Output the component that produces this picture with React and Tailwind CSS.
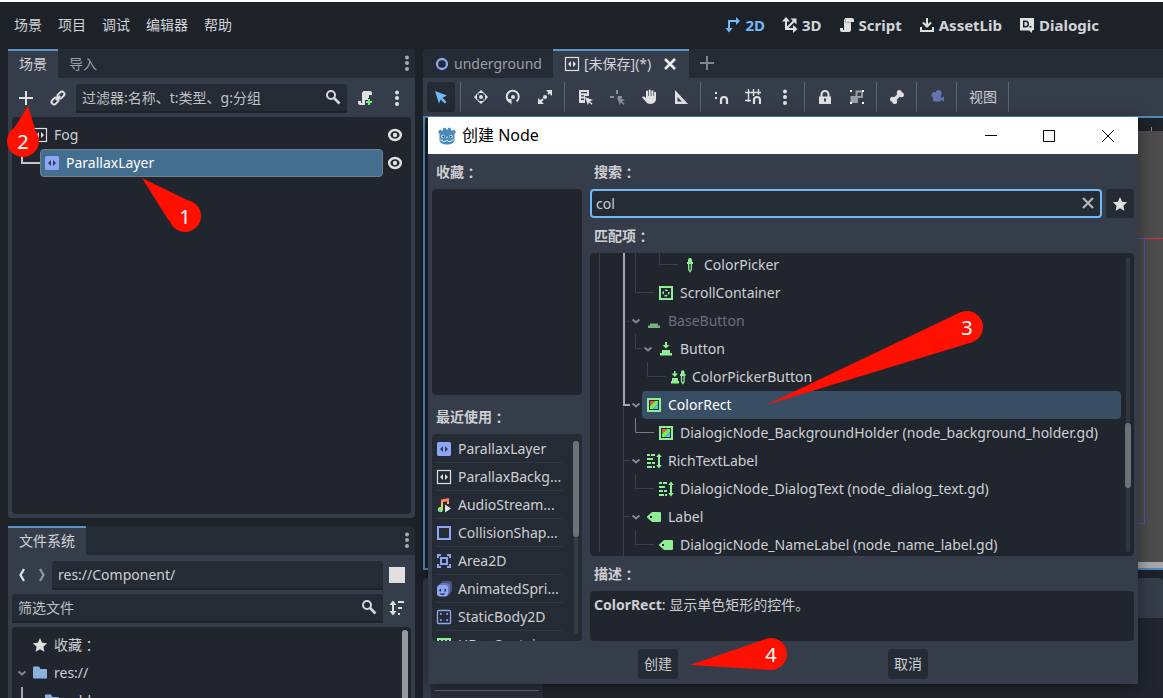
import clsx from 'clsx'

const FONT = "font-['Noto_Sans','Noto_Sans_CJK_SC',sans-serif]"
const field = 'h-[29px] min-w-0 flex-1 bg-[#252b34] rounded-t-[3px] border-b-2 border-[#1d2229] flex items-center pb-px'
const fieldInput = 'min-w-0 flex-1 h-full bg-transparent px-1.5 text-sm text-[#cdcfd2] placeholder-[#bfc1c5] outline-none'

function Icon({ children, size = 16, className }) {
  return (
    <svg width={size} height={size} viewBox="0 0 16 16" fill="#e0e0e0" aria-hidden="true" className={clsx('shrink-0', className)}>
      {children}
    </svg>
  )
}

const line = (stroke, width = 2) => ({ fill: 'none', stroke, strokeWidth: width })
const G = '#8eef97'
const B = '#8da5f3'

const icons = {
  axes2d: <g fill="#70bafa"><path d="M4 13V4h8" {...line('#70bafa')} /><path d="M11 0l4 4-4 4zM.500 11h7L4 15.500z" /></g>,
  axes3d: <><path d="M4 3v9h8M4 12l8-8" {...line('#e0e0e0')} /><path d="M4 0l4 4.500H0zM8.500 1.500h6v6zM11 8l4.500 4-4.500 4z" /></>,
  script: <><path d="M6 1v1a1 1 0 0 0-1 1v10H4v-2H1v2a2 2 0 0 0 2 2h7a2 2 0 0 0 2-2V5h3V3a2 2 0 0 0-2-2z" /><path d="M6.500 2v3.500H12" fill="none" stroke="#a8a8a8" strokeWidth="1" /></>,
  download: <path d="M2 10v4h12v-4M8 1v8M4 5.500l4 4 4-4" {...line('#e0e0e0')} />,
  dialogic: <><path fillRule="evenodd" d="M1 1h14v12l-2 .5V16l-3-2.500H1zM4 3.500v7h2.500a3.500 3.500 0 0 0 0-7zm1.500 1.500h1a2 2 0 0 1 0 4h-1zM10.500 9h2v1.500h-2z" /></>,
  plus: <path d="M8 1v14M1 8h14" {...line('#e0e0e0')} />,
  link: <g transform="rotate(-45 8 8)" {...line('#e0e0e0')}><rect x="0" y="5.500" width="7.500" height="5" rx="2.500" /><rect x="8.500" y="5.500" width="7.500" height="5" rx="2.500" /><path d="M5 8h6" /></g>,
  search: <><circle cx="6" cy="6" r="4" {...line('#d6d7d9')} /><path d="M9 9l5.500 5.500" {...line('#d6d7d9', 2.600)} /></>,
  scriptNew: <><path d="M6 1v1a1 1 0 0 0-1 1v10H4v-2H1v2a2 2 0 0 0 2 2h5v-5h3V8h1V5h3V3a2 2 0 0 0-2-2z" /><path d="M12 9v6M9 12h6" {...line('#6bee7c')} /></>,
  dots: <><circle cx="8" cy="2.500" r="2" /><circle cx="8" cy="8" r="2" /><circle cx="8" cy="14" r="2" /></>,
  parallaxBg: <><rect x="1.500" y="1.500" width="13" height="13" {...line('#e0e0e0', 1.200)} /><path d="M7 5v6L4 8zM9 5v6l3-3z" /></>,
  parallaxLayer: <><rect x="1" y="1" width="14" height="14" rx="1.500" fill={B} /><path fill="#2b3c5c" d="M7 5v6L4 8zM9 5v6l3-3z" /></>,
  eye: <><ellipse cx="8" cy="8" rx="5.800" ry="4.900" {...line('#e0e0e0', 2.500)} /><circle cx="8" cy="8" r="2.200" /></>,
  star: <path d="M8 1l2.100 4.700 5 .6-3.700 3.400 1 5L8 12.200l-4.400 2.500 1-5L.9 6.300l5-.6z" />,
  back: <path d="M10 2L6.500 8l3.500 6" {...line('#e0e0e0', 2.300)} />,
  forward: <path d="M6 2l3.500 6L6 14" {...line('#909399', 2.300)} />,
  sort: <><path d="M4 3v10" {...line('#e0e0e0')} /><path d="M4 .5L7.500 5h-7zM4 15.500L7.500 11h-7zM9 1h6v2H9zM9 7h4v2H9zM9 13h2v2H9z" /></>,
  folder: <path fill="#8ab4de" d="M1 2.500a1 1 0 0 1 1-1h5l1.500 2.500H14a1 1 0 0 1 1 1v8.500H2a1 1 0 0 1-1-1z" />,
  node2d: <circle cx="8" cy="8" r="5" {...line(B, 2.300)} />,
  close: <path d="M3 3l10 10M13 3L3 13" {...line('#f0f0f0', 2.500)} />,
  clear: <path d="M3 3l10 10M13 3L3 13" {...line('#b8babd', 2)} />,
  select: <path fill="#70bafa" d="M2 2l12 4.500-4.500 2.200 4 4-1.800 1.800-4-4L6 14.500z" />,
  move: <><circle cx="8" cy="8" r="2" /><path d="M8 1l3.200 3H4.800zM8 15l3.200-3H4.800zM1 8l3-3.200v6.400zM15 8l-3-3.200v6.400z" /><path d="M4 4h1.800v1.800H4zM10.200 4H12v1.800h-1.800zM4 10.200h1.800V12H4zM10.200 10.200H12V12h-1.800z" opacity=".65" /></>,
  rotate: <><circle cx="8" cy="8" r="2" /><path d="M5 13a6 6 0 1 1 6.500-.6" {...line('#e0e0e0')} /><path d="M1 10h5.500v5.500z" /></>,
  scale: <><circle cx="8" cy="8" r="2" /><path d="M9 1h6v6zM1 9v6h6z" /><path d="M3.500 12.500L6 10M12.500 3.500L11 5" {...line('#e0e0e0')} /></>,
  listSelect: <><path fillRule="evenodd" d="M2 1h10v6L8 7v7H2zM4 3h6v1.300H4zM4 6.300h3v1.300H4zM4 9.600h3v1.300H4z" /><path d="M8 8l8 3-3 1.200 2.500 2.500-1 1-2.500-2.500-1.200 3z" /></>,
  pivot: <g><path d="M8 1v4M1 8h4M9 8h4" {...line('#8c9097', 2)} /><path fill="#8c9097" d="M8 8l8 3-3 1.200 2.500 2.500-1 1-2.500-2.500-1.200 3z" /></g>,
  hand: <path d="M5 2.500a1 1 0 0 1 2 0V7h.7V1.500a1 1 0 0 1 2 0V7h.7V2.300a1 1 0 0 1 2 0V7h.6V3.800a1 1 0 0 1 2 0V10a5 5 0 0 1-5 5C7 15 5.500 14 4.300 12L1 8.500c.8-1.300 2-1.300 4 .5z" />,
  ruler: <path fillRule="evenodd" d="M2 1l13 14H2zM4.500 8v4.500H9z" />,
  snap: <><path d="M8 15v-4a3 3 0 0 1 6 0v4" {...line('#e0e0e0', 2.200)} /><path d="M2 3h2v2H2zM2 8h2v2H2zM6 3h0v2z" /></>,
  snapGrid: <><path d="M3.500 0v13M8.500 0v7M13.500 0v6M0 3.500h16M0 11.500h6" {...line('#e0e0e0', 1.400)} /><path d="M9 15v-4a3 3 0 0 1 6 0v4" {...line('#e0e0e0', 2.200)} /></>,
  lock: <><path d="M4.500 8V5.500a3.500 3.500 0 0 1 7 0V8" {...line('#e0e0e0', 2)} /><path fillRule="evenodd" d="M2 7.500h12V15H2zM7 9.500v3h2v-3z" /></>,
  group: <><path fill="#9a9da2" fillRule="evenodd" d="M6.500 1.500H14v7.500H9V14H1.500V7h5zM8.500 3.500V7H9h3V3.500z" /><path fill="#fff" d="M1 1h2v2H1zM13 1h2v2h-2zM1 13h2v2H1zM13 13h2v2h-2z" /></>,
  bone: <g><path d="M4.500 11.500l7-7" {...line('#e0e0e0', 3.600)} /><circle cx="3.600" cy="10.300" r="2.500" /><circle cx="5.700" cy="12.400" r="2.500" /><circle cx="10.300" cy="3.600" r="2.500" /><circle cx="12.400" cy="5.700" r="2.500" /></g>,
  camera: <path fill="#6475ad" d="M9.500 1a3 3 0 0 0-3 2.500A2.500 2.500 0 1 0 4 8.300V11a1.500 1.500 0 0 0 1.500 1.500h5A1.500 1.500 0 0 0 12 11l3 1.500v-5L12 9V6a3 3 0 0 0-2.500-5z" />,
  audio: (
    <>
      <defs><linearGradient id="audio" x1="0" y1="0" x2="0" y2="1"><stop offset="0" stopColor="#ff5f5f" /><stop offset=".45" stopColor="#ffc45f" /><stop offset=".75" stopColor="#9bee4a" /><stop offset="1" stopColor="#5fd9ff" /></linearGradient></defs>
      <path fill="url(#audio)" d="M13 1L5 2.500V10a2.600 2.600 0 1 0 2 2.500V5l4-.8V7h2z" />
      <path d="M9 7.500v8l6-4z" />
    </>
  ),
  shape: <rect x="2" y="2" width="12" height="12" {...line(B)} />,
  area: <><path d="M2 5V2h3M11 2h3v3M14 11v3h-3M5 14H2v-3" {...line(B)} /><rect x="5" y="5" width="6" height="6" {...line(B)} /></>,
  sprite: <><rect x="5" y="0" width="11" height="12" rx="3" fill="#47537c" /><rect x="3" y="2" width="11" height="12" rx="3" fill="#6476b4" /><rect x="1" y="4" width="11" height="11.500" rx="3" fill={B} /><path d="M3.500 8h1.500v2.500H3.500zM8.500 8H10v2.500H8.500z" fill="#252b34" /><path d="M4.500 12.500q2 1.800 4 0" {...line('#252b34', 1.200)} /></>,
  body: <><rect x="1.500" y="1.500" width="13" height="13" rx="1" {...line(B, 1.300)} /><path fill={B} d="M4 4h1.700v1.700H4zM10.300 4H12v1.700h-1.700zM4 10.300h1.700V12H4zM10.300 10.300H12V12h-1.700z" /></>,
  hbox: <><rect x="2" y="2" width="12" height="12" {...line(G)} /><path d="M6 2v12M10 2v12" {...line(G)} /></>,
  picker: <><path fill={G} d="M6 3a2 2 0 0 1 4 0v2h1v2H5V5h1z" /><path d="M6.700 7v5.500L8 14.500l1.300-2V7" {...line(G, 1.300)} /></>,
  scroll: <><rect x="2" y="2" width="12" height="12" {...line(G)} /><circle cx="8" cy="8" r="2.800" {...line(G, 1.500)} strokeDasharray="2.800 1.600" strokeDashoffset="1.400" /></>,
  baseButton: <path fill="#76b07f" d="M4 10.500h8v2h2v2.500H2v-2.500h2z" />,
  button: <path fill={G} d="M7 1h2v3h2.500L8 7.500 4.500 4H7zM4 9h8v3h2v2.500H2V12h2z" />,
  pickerButton: <><path fill={G} d="M4 2h1.500v2.500h2.500L4.800 8 1.500 4.500H4zM2 9h6v3h1v2.500H1V12h1zM11 3a1.700 1.700 0 0 1 3.500 0v2h1v2h-5.500V5h1z" /><path d="M11.500 7v5.500l1.300 2 1.300-2V7" {...line(G, 1.300)} /></>,
  colorRect: <><rect x="2" y="2" width="12" height="12" fill="#252b34" stroke={G} strokeWidth="2" /><path fill="#ff4b4b" d="M4 4h5L4 9z" /><path fill="#6ff24a" d="M9 4h3v3l-5 5H4V9z" /><path fill="#4bc4ff" d="M12 7v5H7z" /></>,
  richText: <g fill={G}><path d="M1 1h3v2H1zM5 1h4v2H5zM1 5h6v2H1zM1 9h4v2H1zM6 9h3v2H6zM1 13h5v2H1zM7 13h2v2H7zM12 3h2v10h-2z" /><path d="M13 .5L15.800 4h-5.600zM13 15.500l2.800-3.500h-5.600z" /></g>,
  label: <path fill={G} fillRule="evenodd" d="M6 3L1.300 7.200a1 1 0 0 0 0 1.600L6 13h8a1 1 0 0 0 1-1V4a1 1 0 0 0-1-1zM4 7h2v2H4z" />,
}

function Arrow({ show = true }) {
  return (
    <span className="w-3 shrink-0 flex justify-center">
      {show && (
        <svg width="12" height="12" viewBox="0 0 12 12" aria-hidden="true">
          <path d="M2.500 4.500L6 7.500l3.500-3" fill="none" stroke="#85888d" strokeWidth="2" />
        </svg>
      )}
    </span>
  )
}

function IconButton({ label, icon, className = 'w-7 h-7', size }) {
  return (
    <button type="button" aria-label={label} className={clsx('shrink-0 flex items-center justify-center rounded-[3px]', className)}>
      <Icon size={size}>{icons[icon]}</Icon>
    </button>
  )
}

function Tab({ active, children }) {
  return (
    <button type="button" className={clsx('flex items-center gap-1 px-[11px] pb-0.5 text-sm border-t-2', active ? 'bg-[#363d4a] border-[#5a94c9] text-[#d2d4d7]' : 'border-transparent text-[#9c9fa4]')}>
      {children}
    </button>
  )
}

function DockTabs({ children }) {
  return (
    <div className="h-[29px] shrink-0 flex bg-[#252b34] rounded-tr">
      {children}
      <button type="button" aria-label="停靠选项" className="ml-auto w-4 pb-px flex items-center justify-center">
        <Icon className="opacity-70">{icons.dots}</Icon>
      </button>
    </div>
  )
}

// full-width colon, centred in its cell
function Colon() {
  return <span className="font-['Noto_Sans_CJK_TC',sans-serif]">：</span>
}

function Callout({ n, tip, base, at, className }) {
  return (
    <svg width="220" height="100" className={clsx('absolute pointer-events-none overflow-visible', className)}>
      <path d={`M${tip}L${base}z`} fill="#ff1000" />
      <circle cx={at[0]} cy={at[1]} r="16" fill="#ff1000" />
      <text x={at[0]} y={at[1] + 8} textAnchor="middle" fontSize="20" fill="#fff">{n}</text>
    </svg>
  )
}

function SceneDock() {
  return (
    <section className="flex-1 min-h-0 flex flex-col">
      <DockTabs>
        <Tab active>场景</Tab>
        <Tab>导入</Tab>
      </DockTabs>
      <div className="flex-1 flex flex-col bg-[#363d4a] rounded-b px-1 pt-1.5 pb-1">
        <div className="flex gap-1">
          <IconButton label="添加节点" icon="plus" />
          <IconButton label="实例化场景" icon="link" />
          <label className={field}>
            <input aria-label="过滤节点" className={fieldInput} placeholder="过滤器:名称、t:类型、g:分组" />
            <Icon className="mr-1.5">{icons.search}</Icon>
          </label>
          <IconButton label="附加脚本" icon="scriptNew" />
          <IconButton label="更多选项" icon="dots" />
        </div>
        <div className="flex-1 mt-1 p-1 bg-[#21262e] rounded relative text-sm text-[#cdcfd2]">
          <svg width="24" height="16" className="absolute left-2 top-8" aria-hidden="true">
            <path d="M2 0v14h18" fill="none" stroke="#c4c6c8" strokeWidth="2" />
          </svg>
          <div className="h-7 flex items-center">
            <div className="flex-1 h-full ml-3 px-1 flex items-center gap-1.5">
              <Icon>{icons.parallaxBg}</Icon>Fog
            </div>
            <button type="button" aria-label="切换可见性" className="w-6 flex justify-center"><Icon>{icons.eye}</Icon></button>
          </div>
          <div className="h-7 flex items-center">
            <div className="flex-1 h-full ml-6 px-[3px] flex items-center gap-1.5 rounded-sm bg-[#446e90] border border-[#74808c] text-white">
              <Icon>{icons.parallaxLayer}</Icon>ParallaxLayer
            </div>
            <button type="button" aria-label="切换可见性" className="w-6 flex justify-center"><Icon>{icons.eye}</Icon></button>
          </div>
        </div>
      </div>
    </section>
  )
}

function FileDock() {
  return (
    <section className="h-[172px] flex flex-col">
      <DockTabs>
        <Tab active>文件系统</Tab>
      </DockTabs>
      <div className="flex-1 min-h-0 flex flex-col gap-1 bg-[#363d4a] px-1 pt-1.5">
        <div className="flex shrink-0">
          <IconButton label="后退" icon="back" className="w-5 h-7" />
          <IconButton label="前进" icon="forward" className="w-5 h-7" />
          <label className={field}>
            <input aria-label="当前路径" className={fieldInput} defaultValue="res://Component/" />
          </label>
          <button type="button" aria-label="切换拆分模式" className="w-7 h-7 flex items-center justify-center">
            <span className="size-4 bg-[#e0e0e0]" />
          </button>
        </div>
        <div className="flex shrink-0">
          <label className={field}>
            <input aria-label="筛选文件" className={fieldInput} placeholder="筛选文件" />
            <Icon className="mr-1.5">{icons.search}</Icon>
          </label>
          <IconButton label="排序文件" icon="sort" />
        </div>
        <div className="flex-1 min-h-0 overflow-hidden flex bg-[#21262e] rounded-t text-sm text-[#cdcfd2]">
          <div className="flex-1 p-1 relative">
            <span className="absolute left-[9px] top-[60px] h-7 w-0.5 bg-[#a4a6a9]" />
            <div className="h-7 flex items-center"><Arrow show={false} /><Icon className="ml-1 mr-1.5">{icons.star}</Icon>收藏<Colon /></div>
            <div className="h-7 flex items-center"><Arrow /><Icon className="ml-1 mr-1.5">{icons.folder}</Icon>res://</div>
            <div className="h-7 flex items-center pl-3"><Arrow /><Icon className="ml-1 mr-1.5">{icons.folder}</Icon>addons</div>
          </div>
          <div className="w-1.5 mt-[3px] mr-[3px] rounded-t-full bg-[#96989b]" />
        </div>
      </div>
    </section>
  )
}

const tools = [
  ['move', '移动模式'], ['rotate', '旋转模式'], ['scale', '缩放模式'], null,
  ['listSelect', '列表选择'], ['pivot', '更改轴心'], ['hand', '平移模式'], ['ruler', '标尺模式'], null,
  ['snap', '智能吸附'], ['snapGrid', '栅格吸附'], ['dots', '吸附选项'], null,
  ['lock', '锁定'], ['group', '编组'], null,
  ['bone', '骨骼'], null,
  ['camera', '覆盖相机'], null,
]

function Separator() {
  return <span className="w-1 h-[30px] shrink-0 pl-px"><span className="block w-px h-full bg-[#5f656f]" /></span>
}

function Workspace() {
  return (
    <main className="flex-1 min-w-0 flex flex-col">
      <div className="h-[29px] shrink-0 flex bg-[#252b34] rounded-tl">
        <Tab><Icon>{icons.node2d}</Icon>underground</Tab>
        <Tab active>
          <Icon>{icons.parallaxBg}</Icon>[未保存](*)
          <Icon className="ml-[7px]">{icons.close}</Icon>
        </Tab>
        <button type="button" aria-label="添加新场景" className="px-2.5 pb-px"><Icon className="opacity-50">{icons.plus}</Icon></button>
      </div>
      <div className="h-[38px] shrink-0 flex items-start gap-1 p-1 bg-[#363d4a]">
        <IconButton label="选择模式" icon="select" className="w-7 h-[30px] bg-[#252b34]" />
        <Separator />
        {tools.map((t, i) => (t ? <IconButton key={i} label={t[1]} icon={t[0]} className="w-7 h-[30px]" /> : <Separator key={i} />))}
        <button type="button" className="h-[30px] px-1.5 text-sm text-[#cdcfd2]">视图</button>
        <Separator />
      </div>
      <div className="flex-1 min-h-0 flex flex-col border-2 border-r-0 border-[#4f89bb] bg-[#1d2229]">
        <div className="h-[13px] shrink-0 flex justify-end items-end"><span className="w-px h-1 mr-[11px] bg-[#8a8d92]" /></div>
        <div className="flex-1 ml-[15px] relative overflow-hidden bg-[#4d4d4d]">
          <span className="absolute inset-x-0 top-[107px] h-px bg-[#d6324a]" />
          <span className="absolute left-0 right-[18px] top-[107px] h-[286px] border border-[#5454b4]" />
          <span className="absolute inset-x-0 bottom-0 h-1.5 bg-[#a8a8a8]" />
        </div>
      </div>
      <div className="h-[120px] mt-2 shrink-0 flex flex-col bg-[#363d4a] rounded-t">
        <div className="h-10" />
        <div className="flex-1 ml-2 flex items-end bg-[#21262e]">
          <div className="w-28 h-4 px-1 pt-2 bg-[#2b303a]"><div className="h-px bg-[#6a6e76]" /></div>
        </div>
      </div>
    </main>
  )
}

const recent = [
  ['parallaxLayer', 'ParallaxLayer'],
  ['parallaxBg', 'ParallaxBackg...'],
  ['audio', 'AudioStream...'],
  ['shape', 'CollisionShap...'],
  ['area', 'Area2D'],
  ['sprite', 'AnimatedSpri...'],
  ['body', 'StaticBody2D'],
  ['hbox', 'HBoxContainer'],
]

const matches = [
  { icon: 'picker', name: 'ColorPicker', indent: 'pl-19' },
  { icon: 'scroll', name: 'ScrollContainer', indent: 'pl-13' },
  { icon: 'baseButton', name: 'BaseButton', indent: 'pl-10', open: true, dim: true },
  { icon: 'button', name: 'Button', indent: 'pl-13', open: true },
  { icon: 'pickerButton', name: 'ColorPickerButton', indent: 'pl-16' },
  { icon: 'colorRect', name: 'ColorRect', indent: 'pl-10', open: true, selected: true },
  { icon: 'colorRect', name: 'DialogicNode_BackgroundHolder (node_background_holder.gd)', indent: 'pl-13' },
  { icon: 'richText', name: 'RichTextLabel', indent: 'pl-10', open: true },
  { icon: 'richText', name: 'DialogicNode_DialogText (node_dialog_text.gd)', indent: 'pl-13' },
  { icon: 'label', name: 'Label', indent: 'pl-10', open: true },
  { icon: 'label', name: 'DialogicNode_NameLabel (node_name_label.gd)', indent: 'pl-13' },
]

const heading = 'h-[35px] shrink-0 flex items-center pl-1 font-bold'

function CreateDialog() {
  return (
    <div role="dialog" aria-label="创建 Node" className="absolute left-[428px] right-[25px] top-[117px] bottom-3.5 flex flex-col bg-[#363d4a] text-sm text-[#cdcfd2] shadow-[0_3px_16px_rgba(0,0,0,0.45)]">
      <header className="h-[37px] shrink-0 flex items-center bg-white text-black pl-2.5">
        <svg width="18" height="18" viewBox="0 0 18 18" aria-hidden="true">
          <path fill="#478cbf" d="M0 5l2-2.500 2 1.200L5 3V1.500L7.500.5 8.300 2.500h1.400l.8-2L13 1.500V3l1 .7 2-1.200L18 5l-1.500 2v6c0 3-3.500 4.500-7.500 4.500S1.500 16 1.500 13V7z" />
          <circle cx="5" cy="9.500" r="1.700" fill="#fff" /><circle cx="13" cy="9.500" r="1.700" fill="#fff" />
          <circle cx="5.300" cy="9.600" r="1.100" fill="#414042" /><circle cx="12.700" cy="9.600" r="1.100" fill="#414042" />
          <path d="M9 9.500v1.800M2 13l2.500.3.500 1.200h2.500l.5-.8h2l.5.8H13l.5-1.200L16 13" fill="none" stroke="#fff" strokeWidth=".8" />
        </svg>
        <h1 className="ml-1.5 mr-auto pb-0.5 text-base">创建 Node</h1>
        <button type="button" aria-label="最小化" className="w-[58px] flex justify-center"><svg width="12" height="12"><path d="M0 5.500h12" stroke="#000" /></svg></button>
        <button type="button" aria-label="最大化" className="w-[58px] flex justify-center"><svg width="12" height="12"><path d="M.5.5h11v11H.5z" fill="none" stroke="#000" /></svg></button>
        <button type="button" aria-label="关闭" className="w-15 flex justify-center"><svg width="12" height="12"><path d="M0 0l12 12M12 0L0 12" stroke="#000" /></svg></button>
      </header>

      <div className="flex-1 min-h-0 flex gap-2 px-1">
        <div className="w-[150px] shrink-0 flex flex-col">
          <h2 className={heading}>收藏<Colon /></h2>
          <div className="h-[206px] shrink-0 mb-1 rounded bg-[#21262e]" />
          <h2 className={heading}>最近使用<Colon /></h2>
          <div className="flex-1 min-h-0 overflow-hidden flex rounded bg-[#252b34]">
            <ul className="flex-1 min-w-0 pl-1 pt-px">
              {recent.map(([icon, name]) => (
                <li key={icon} className="h-7 flex items-center gap-1.5 border-b border-[#323842] whitespace-nowrap">
                  <Icon>{icons[icon]}</Icon>{name}
                </li>
              ))}
            </ul>
            <div className="w-1.5 ml-2.5 mr-[3px] my-[7px] px-px bg-clip-content bg-[#363b44]">
              <div className="h-24 -mx-px rounded-full bg-[#6d7178]" />
            </div>
          </div>
        </div>

        <div className="flex-1 min-w-0 flex flex-col">
          <label htmlFor="search" className={heading}>搜索<Colon /></label>
          <div className="flex gap-1">
            <div className="flex-1 h-[29px] flex items-center pb-px bg-[#252b34] border-2 border-[#70bafa] rounded-sm">
              <input id="search" defaultValue="col" className="flex-1 min-w-0 h-full bg-transparent px-1 text-sm outline-none" />
              <button type="button" aria-label="清除" className="mr-1"><Icon>{icons.clear}</Icon></button>
            </div>
            <IconButton label="收藏" icon="star" className="w-7 h-[29px] bg-[#252b34]" />
          </div>
          <h2 className={heading}>匹配项<Colon /></h2>
          <div className="flex-1 min-h-0 overflow-hidden relative flex rounded bg-[#21262e]">
            <svg width="90" height="304" className="absolute left-0 top-0" fill="none" stroke="#3b4048" aria-hidden="true">
              <path d="M9.500 0v299M33.500 154v150M45.500 0v39.500H64M69.500 0v11.500H88M37 68.500h3M45.500 81v14.500H52M57.500 109v14.500H76M33 207.500h7M45.500 221v14.500H64M33 263.500h7M45.500 277v14.500H64" />
              <path d="M45.500 165v14.500H64" stroke="#777b81" />
              <path d="M34 0v152h6" stroke="#a5a7aa" strokeWidth="2" />
            </svg>
            <div className="flex-1 min-w-0 -mt-0.5 relative">
              {matches.map((m) => (
                <div key={m.name} className={clsx('h-7 flex items-center', m.indent)}>
                  <Arrow show={!!m.open} />
                  <div className={clsx('flex-1 h-full px-1 flex items-center gap-1.5 whitespace-nowrap rounded-sm', m.selected && 'bg-[#384e65] text-white', m.dim && 'text-[#6b6f75]')}>
                    <Icon>{icons[m.icon]}</Icon>{m.name}
                  </div>
                </div>
              ))}
            </div>
            <div className="w-1.5 ml-1 mr-[3px] my-1 pt-[166px] relative">
              <span className="absolute inset-x-px inset-y-0 rounded-full bg-[#31363f]" />
              <div className="h-[65px] rounded-full bg-[#6d7178] relative" />
            </div>
          </div>
          <h2 className={heading}>描述<Colon /></h2>
          <p className="h-[50px] shrink-0 px-1 py-1 rounded bg-[#21262e]"><b>ColorRect</b>: 显示单色矩形的控件。</p>
        </div>
      </div>

      <footer className="shrink-0 flex justify-evenly pt-2 pb-[5px]">
        <button type="button" className="h-[30px] w-10 rounded-[3px] bg-[#252b34]">创建</button>
        <button type="button" className="h-[30px] w-10 rounded-[3px] bg-[#252b34]">取消</button>
      </footer>
    </div>
  )
}

export default function App() {
  return (
    <div className={clsx('h-screen relative overflow-hidden flex flex-col bg-[#1d2229] border-t-2 border-white', FONT)}>
      <header className="h-[47px] shrink-0 flex items-center justify-between pl-3.5 pr-16 pb-px text-[#d2d4d7]">
        <nav className="flex gap-4 text-sm">
          {['场景', '项目', '调试', '编辑器', '帮助'].map((m) => <button key={m} type="button">{m}</button>)}
        </nav>
        <nav className="flex gap-[17px] text-[15px] font-bold">
          <button type="button" className="flex items-center gap-1 text-[#70bafa]"><Icon>{icons.axes2d}</Icon>2D</button>
          <button type="button" className="flex items-center gap-1"><Icon>{icons.axes3d}</Icon>3D</button>
          <button type="button" className="flex items-center gap-1"><Icon>{icons.script}</Icon>Script</button>
          <button type="button" className="flex items-center gap-1"><Icon>{icons.download}</Icon>AssetLib</button>
          <button type="button" className="flex items-center gap-1"><Icon>{icons.dialogic}</Icon>Dialogic</button>
        </nav>
      </header>
      <div className="flex-1 min-h-0 flex gap-2 pl-2">
        <div className="w-[407px] shrink-0 flex flex-col gap-2">
          <SceneDock />
          <FileDock />
        </div>
        <Workspace />
      </div>
      <div className="absolute inset-x-0 -top-0.5 bottom-0 pointer-events-none">
        <div className="pointer-events-auto"><CreateDialog /></div>
        <Callout n="1" className="left-[142px] top-[178px]" tip="0 0" base="45 22L27 43" at={[43, 38]} />
        <Callout n="2" className="left-[7px] top-[106px]" tip="21 0" base="28 23L6 24" at={[16, 35]} />
        <Callout n="3" className="left-[766px] top-[311px]" tip="0 94" base="195 1L207 31" at={[201, 16]} />
        <Callout n="4" className="left-[690px] top-[638px]" tip="0 27" base="76 1L81 32" at={[81, 16]} />
      </div>
    </div>
  )
}
